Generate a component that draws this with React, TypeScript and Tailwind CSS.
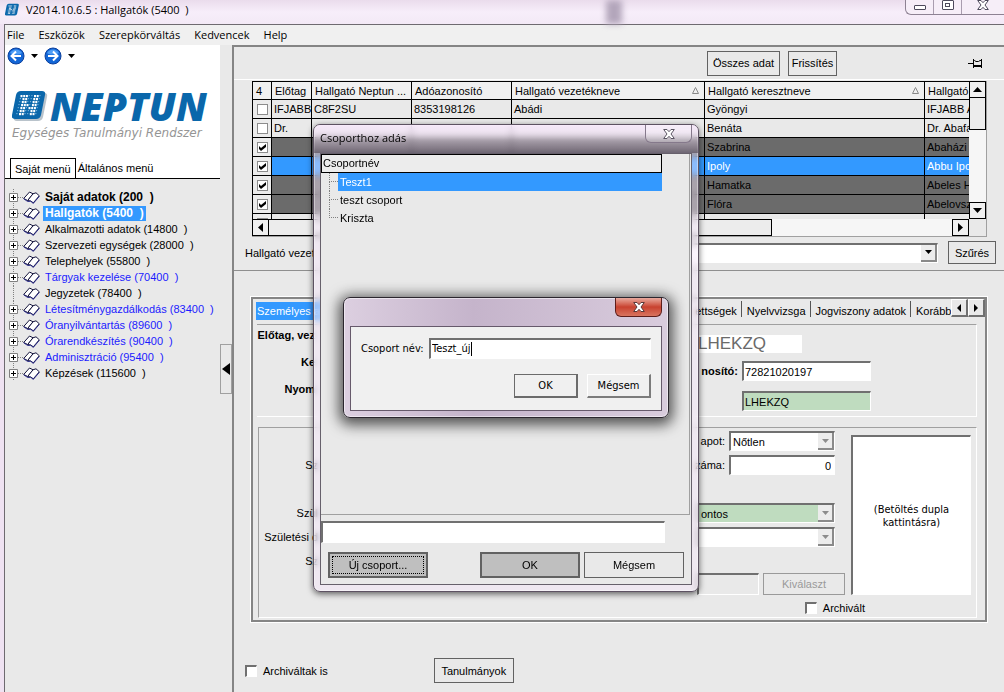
import type { ReactNode } from "react";
import clsx from "clsx";

type TreeItem = {
  label: string;
  tone?: "bold" | "selected" | "blue";
  leaf?: boolean;
};

const TREE: TreeItem[] = [
  { label: "Saját adatok (200\u00a0\u00a0)", tone: "bold" },
  { label: "Hallgatók (5400\u00a0\u00a0)", tone: "selected" },
  { label: "Alkalmazotti adatok (14800\u00a0\u00a0)" },
  { label: "Szervezeti egységek (28000\u00a0\u00a0)" },
  { label: "Telephelyek (55800\u00a0\u00a0)" },
  { label: "Tárgyak kezelése (70400\u00a0\u00a0)", tone: "blue" },
  { label: "Jegyzetek (78400\u00a0\u00a0)", leaf: true },
  { label: "Létesítménygazdálkodás (83400\u00a0\u00a0)", tone: "blue" },
  { label: "Óranyilvántartás (89600\u00a0\u00a0)", tone: "blue" },
  { label: "Órarendkészítés (90400\u00a0\u00a0)", tone: "blue" },
  { label: "Adminisztráció (95400\u00a0\u00a0)", tone: "blue" },
  { label: "Képzések (115600\u00a0\u00a0)" }
];

const ROWS = [
  { prefix: "IFJABB", code: "C8F2SU", tax: "8353198126", last: "Abádi", first: "Gyöngyi", full: "IFJABB A" },
  { prefix: "Dr.", first: "Benáta", full: "Dr. Abafa" },
  { first: "Szabrina", full: "Abaházi", state: "dark" },
  { first: "Ipoly", full: "Abbu Ipo", state: "selected" },
  { first: "Hamatka", full: "Abeles H", state: "dark" },
  { first: "Flóra", full: "Abelovsz", state: "dark" },
  { first: "Hannah", full: "Abelsz" }
];

const MENU = ["File", "Eszközök", "Szerepkörváltás", "Kedvencek", "Help"];

const sunken =
  "border-t-2 border-l-2 border-r border-b border-t-[#707070] border-l-[#707070] border-r-white border-b-white";

export default function App() {
  return (
    <div className="relative flex min-h-screen flex-col overflow-hidden bg-[#efe2f2] font-['Liberation_Sans',Arial,sans-serif] text-[11px] leading-4 text-black">
      <TitleBar />
      <div className="ml-1 flex flex-1 flex-col border-t border-l border-[#6e6a70] bg-[#e9e9e9]">
        <nav className="flex h-5 items-center gap-[14px] bg-[#f0f0f0] px-[2px] font-['Open_Sans',sans-serif] text-[11px]">
          {MENU.map((item) => (
            <button key={item} type="button">
              {item}
            </button>
          ))}
        </nav>
        <div className="flex flex-1">
          <Sidebar />
          <main className="flex min-w-0 flex-1 flex-col border-t-2 border-l-2 border-[#858585]">
            <Toolbar />
            <StudentList />
            <DetailPanel />
            <footer className="mt-9 flex items-center gap-[106px] pb-[6px] pl-[11px]">
              <CheckField id="archived-too" label="Archiváltak is" />
              <FlatButton className="h-[25px] w-20">Tanulmányok</FlatButton>
            </footer>
          </main>
        </div>
      </div>
      <GroupDialog />
      <NameDialog />
    </div>
  );
}

function TitleBar() {
  return (
    <header className="flex h-6 items-start bg-linear-to-b from-[#eadcec] via-[#f7eefa] to-[#f3e9f6]">
      <div className="flex items-center gap-[6px] pt-[2px] pl-[5px]">
        <NeptunMark className="h-[14px] w-[15px]" />
        <h1 className="font-['Open_Sans',sans-serif] text-[11px]">
          V2014.10.6.5 : Hallgatók (5400&nbsp;&nbsp;)
        </h1>
      </div>
      <div className="mr-[382px] ml-auto h-6 w-4 bg-[#b3a6bb] blur-[3px]" />
      <div className="-ml-[99px] flex h-[15px] w-[99px] shrink-0 rounded-bl-md border-b border-l border-[#8d8293] bg-[#f6eef8]">
        <button aria-label="Kis méret" className="flex w-7 items-center justify-center border-r border-[#a99daf]" type="button">
          <span className="h-[5px] w-[12px] rounded-[1px] border border-[#4d4a5c] bg-white" />
        </button>
        <button aria-label="Teljes méret" className="flex w-7 items-start justify-center border-r border-[#a99daf]" type="button">
          <span className="flex h-[10px] w-[12px] items-center justify-center rounded-[1px] border border-[#4d4a5c] bg-white">
            <span className="h-[4px] w-[5px] border border-[#4d4a5c]" />
          </span>
        </button>
        <button aria-label="Bezárás" className="flex flex-1 items-start justify-center" type="button">
          <CloseGlyph className="h-[10px] w-3 text-[#4d4a5c]" />
        </button>
      </div>
    </header>
  );
}

function Sidebar() {
  return (
    <aside className="flex w-[227px] shrink-0">
      <div className="w-[215px]">
        <div className="border-b border-black bg-white">
          <div className="flex h-5 items-center gap-[6px] px-[2px] pt-px">
            <NavArrow label="Vissza" />
            <DownGlyph className="h-1 w-[7px]" />
            <NavArrow flipped label="Előre" />
            <DownGlyph className="h-1 w-[7px]" />
          </div>
          <div className="mt-[22px] pl-[7px]">
            <div className="flex items-center gap-[2px]">
              <NeptunMark className="h-8 w-9 shrink-0" shadow />
              <span className="font-['Open_Sans',sans-serif] text-[39px] leading-[38px] font-extrabold text-[#0a67ab] italic">
                NEPTUN
              </span>
            </div>
            <p className="font-['DejaVu_Sans',sans-serif] text-[12px] leading-4 whitespace-nowrap text-[#959595] italic">
              Egységes Tanulmányi Rendszer
            </p>
          </div>
          <div className="mt-[17px] flex pl-[5px]" role="tablist">
            <button aria-selected className="-mb-px h-5 border border-b-0 border-black bg-white px-1" role="tab" type="button">
              Saját menü
            </button>
            <button aria-selected={false} className="h-5 px-[2px]" role="tab" type="button">
              Általános menü
            </button>
          </div>
        </div>
        <ul className="pt-[10px] pl-1">
          {TREE.map((item) => (
            <li className="flex h-4 items-center" key={item.label}>
              {item.leaf ? (
                <span className="ml-1 h-full w-[10px] border-l border-dotted border-[#808080]" />
              ) : (
                <ExpandBox />
              )}
              <BookIcon className="h-[13px] w-[17px] shrink-0" />
              <button
                className={clsx(
                  "ml-[3px] px-[2px] leading-[15px] whitespace-nowrap",
                  item.tone === "bold" && "text-[12px] font-bold",
                  item.tone === "selected" && "bg-[#3399ff] text-[12px] font-bold text-white",
                  item.tone === "blue" && "text-[#1b1bff]"
                )}
                type="button"
              >
                {item.label}
              </button>
            </li>
          ))}
        </ul>
      </div>
      <button
        aria-label="Menü elrejtése"
        className="mt-[299px] flex h-[50px] w-3 items-center justify-center self-start border border-[#a0a0a0]"
        type="button"
      >
        <svg className="h-3 w-2" viewBox="0 0 8 12">
          <path d="M8 0v12L0 6z" />
        </svg>
      </button>
    </aside>
  );
}

function Toolbar() {
  return (
    <div className="flex h-[33px] items-center gap-2 border-b border-white pr-[22px]">
      <FlatButton className="ml-auto h-[25px] w-[73px]">Összes adat</FlatButton>
      <FlatButton className="h-[25px] w-[49px]">Frissítés</FlatButton>
      <button aria-label="Rögzítés" className="ml-[123px]" type="button">
        <svg className="h-[11px] w-[14px]" fill="none" stroke="#000" viewBox="0 0 14 11">
          <path d="M0 5.500h5M5.500 1v9M5.500 2.500h1l1.500 1h2.500l1.500-1h1.500M5.500 8.500h8M6 7.500h7M13.500 1v9" />
        </svg>
      </button>
    </div>
  );
}

function StudentList() {
  return (
    <section className="border-b border-[#8f8f8f] pb-[6px]">
      <div className="mt-px mr-[17px] ml-[18px] border-r border-b border-[#a0a0a0]">
        <div className="flex">
          <div className="h-[138px] min-w-0 flex-1 overflow-hidden border-t border-l border-black">
            <table className="w-full table-fixed border-separate border-spacing-0">
              <thead>
                <tr>
                  <HeadCell className="w-[19px] text-center">4</HeadCell>
                  <HeadCell className="w-10">Előtag</HeadCell>
                  <HeadCell className="w-[100px]">Hallgató Neptun ...</HeadCell>
                  <HeadCell className="w-[100px]">Adóazonosító</HeadCell>
                  <HeadCell className="w-[193px]" sorted>
                    Hallgató vezetékneve
                  </HeadCell>
                  <HeadCell className="w-[220px]" sorted>
                    Hallgató keresztneve
                  </HeadCell>
                  <HeadCell last>Hallgató</HeadCell>
                </tr>
              </thead>
              <tbody>
                {ROWS.map((row) => (
                  <tr
                    className={clsx(
                      row.state === "dark" && "bg-[#6b6b6b]",
                      row.state === "selected" && "bg-[#3399ff] text-white"
                    )}
                    key={row.first}
                  >
                    <td className="h-[19px] border-r border-b border-black bg-[#ececec] p-0">
                      <RowCheck checked={Boolean(row.state)} label={row.first} />
                    </td>
                    <Cell>{row.prefix}</Cell>
                    <Cell>{row.code}</Cell>
                    <Cell>{row.tax}</Cell>
                    <Cell>{row.last}</Cell>
                    <Cell>{row.first}</Cell>
                    <Cell last>{row.full}</Cell>
                  </tr>
                ))}
              </tbody>
            </table>
          </div>
          <div className="flex h-[138px] w-[17px] shrink-0 flex-col bg-[#f6f6f6]">
            <ScrollButton label="Fel" path="M0 7h9L4.500 2z" />
            <div className="h-8 border border-t-0 border-black bg-[#ececec]" />
            <div className="flex-1" />
            <ScrollButton label="Le" path="M0 2h9L4.500 7z" />
          </div>
        </div>
        <div className="flex h-[17px]">
          <ScrollButton label="Balra" path="M7 0v9L2 4.500z" />
          <div className="w-[503px] border border-l-0 border-black bg-[#ececec]" />
          <div className="flex-1 bg-[#f6f6f6]" />
          <ScrollButton label="Jobbra" path="M2 0v9l5-4.500z" />
          <div className="w-[17px]" />
        </div>
      </div>
      <div className="mt-1 flex items-center pr-2 pl-[11px]">
        <label className="w-[68px] overflow-hidden whitespace-nowrap" htmlFor="filter">
          Hallgató vezet
        </label>
        <SelectField active className="ml-3 flex-1" id="filter" />
        <FlatButton className="ml-[10px] h-[23px] w-12">Szűrés</FlatButton>
      </div>
    </section>
  );
}

function DetailPanel() {
  return (
    <section className="mt-[26px] mr-[17px] ml-[17px] border-2 border-[#858585] outline outline-white">
      <div className="flex h-[21px] items-stretch overflow-hidden" role="tablist">
        <button className="mt-[3px] ml-[3px] h-[18px] bg-[#3399ff] px-px text-left whitespace-nowrap text-white" role="tab" type="button">
          Személyes adatok
        </button>
        <Tab className="ml-auto">ettségek</Tab>
        <Tab>Nyelvvizsga</Tab>
        <Tab>Jogviszony adatok</Tab>
        <Tab className="w-10" last>
          Korábbi
        </Tab>
        <TabScroll label="Előző fülek" path="M4 0v8L0 4z" />
        <TabScroll label="Következő fülek" path="M0 0v8l4-4z" />
      </div>
      <div className="mt-1 mr-2 ml-1 flex h-[93px] justify-between border-t border-r border-b border-t-[#a0a0a0] border-r-white border-b-white">
        <div className="flex w-[58px] flex-col items-end gap-[11px] pt-[2px] font-bold whitespace-nowrap">
          <span>Előtag, vez</span>
          <span>Ke</span>
          <span>Nyom</span>
        </div>
        <div className="mr-[105px] grid grid-cols-[40px_129px] items-center gap-x-1">
          <div className="col-span-2 mb-1 h-[18px] self-end justify-self-start bg-white pr-9 text-[17px] leading-[18px] text-[#6a6a6a]">
            LHEKZQ
          </div>
          <label className="text-right font-bold" htmlFor="edu-id">
            nosító:
          </label>
          <input className={clsx("h-5 bg-white px-px", sunken)} defaultValue="72821020197" id="edu-id" />
          <span />
          <input aria-label="Neptun kód" className={clsx("h-5 bg-[#bfdcbf] px-px", sunken)} defaultValue="LHEKZQ" />
        </div>
      </div>
      <div className="mt-[10px] mr-2 mb-[2px] ml-[5px] flex h-[191px] justify-between border border-[#a0a0a0] border-r-white border-b-white">
        <div className="flex w-[59px] flex-col items-end gap-2 pt-[29px] whitespace-nowrap">
          <span>Sz</span>
          <span className="mt-6">Szül</span>
          <span>Születési d</span>
          <span>Sz</span>
        </div>
        <div className="mr-[5px] flex pt-[3px]">
          <div className="flex flex-col items-end">
            <div className="flex items-center gap-1">
              <label htmlFor="marital">apot:</label>
              <SelectField className="w-[106px]" id="marital" value="Nőtlen" />
            </div>
            <div className="mt-1 flex items-center gap-1">
              <label htmlFor="children">záma:</label>
              <input className={clsx("h-5 w-[106px] bg-white px-[3px] text-right", sunken)} defaultValue="0" id="children" />
            </div>
            <SelectField className="mt-7 w-[138px]" green label="Pontosság" value="ontos" />
            <SelectField className="mt-1 w-[138px]" label="Születési adat" />
            <div className="mt-[26px] -mr-[10px] flex items-center gap-1">
              <input aria-label="Kiválasztott" className={clsx("h-[22px] w-[62px]", sunken)} disabled />
              <button className="h-[22px] w-[82px] border border-[#9a9a9a] text-[#9a9a9a]" disabled type="button">
                Kiválaszt
              </button>
            </div>
            <div className="mt-[5px] -mr-[30px]">
              <CheckField id="archived" label="Archivált" />
            </div>
          </div>
          <button
            className={clsx(
              "mt-1 ml-4 flex h-40 w-[120px] items-center justify-center bg-white px-4 text-center font-['DejaVu_Sans_Condensed','DejaVu_Sans',sans-serif] text-[11px] leading-[13px]",
              sunken
            )}
            type="button"
          >
            (Betöltés dupla kattintásra)
          </button>
        </div>
      </div>
    </section>
  );
}

function GroupDialog() {
  return (
    <div
      aria-label="Csoporthoz adás"
      className="absolute top-[124px] left-[313px] w-[386px] overflow-hidden rounded-[7px] border border-[#5d5262] bg-[#f6e6fb]/45 px-[6px] pb-[6px] shadow-[0_2px_6px_rgba(0,0,0,0.6)] inset-ring inset-ring-white/40 backdrop-blur-[3px]"
      role="dialog"
    >
      <div className="-mx-[6px] flex h-7 items-start justify-between bg-linear-to-b from-[#f8e8fc]/70 via-[#d8c8dc]/20 via-45% to-[#4a404e]/60 px-[6px]">
        <h2 className="pt-[5px] font-['Open_Sans',sans-serif] text-[11px]">Csoporthoz adás</h2>
        <button
          aria-label="Bezárás"
          className="flex h-[18px] w-[47px] items-center justify-center rounded-b-md border border-t-0 border-[#85798b] bg-white/20"
          type="button"
        >
          <CloseGlyph className="h-[10px] w-3 text-[#5b5563]" />
        </button>
      </div>
      <div className="border border-[#66606b] bg-[#e9e9e9]">
        <div className="mr-px h-[361px] border-r border-b border-[#a0a0a0]">
          <div className="h-[19px] w-[341px] border border-black bg-[#ececec] px-px">Csoportnév</div>
          <ul className="w-[341px] pl-2">
            <GroupItem selected>Teszt1</GroupItem>
            <GroupItem>teszt csoport</GroupItem>
            <GroupItem last>Kriszta</GroupItem>
          </ul>
        </div>
        <input aria-label="Csoport" className={clsx("mt-[6px] block h-[22px] w-[344px] bg-white px-1", sunken)} />
        <div className="flex px-[7px] pt-[9px] pb-[6px]">
          <button className="h-[26px] w-[100px] border-2 border-[#626262] bg-[#bfbfbf] p-[2px]" type="button">
            <span className="flex h-full items-center justify-center border border-dotted border-black">Új csoport...</span>
          </button>
          <button className="ml-[52px] h-[26px] w-[100px] border-2 border-[#626262] bg-[#bfbfbf]" type="button">
            OK
          </button>
          <FlatButton className="ml-1 h-[26px] w-[100px]">Mégsem</FlatButton>
        </div>
      </div>
    </div>
  );
}

function NameDialog() {
  return (
    <div
      aria-label="Új csoport"
      className="absolute top-[297px] left-[343px] w-[326px] rounded-[7px] border border-[#2b262e] bg-linear-to-r from-[#dccfe0] via-[#c5b4cb] via-40% to-[#d9ccdd] px-[6px] pb-[6px] font-['DejaVu_Sans_Condensed','DejaVu_Sans',sans-serif] shadow-[0_3px_14px_4px_rgba(0,0,0,0.65)] inset-ring inset-ring-white/50"
      role="dialog"
    >
      <div className="flex h-7 items-start justify-end">
        <button
          aria-label="Bezárás"
          className="flex h-[19px] w-[47px] items-center justify-center rounded-b-md border border-t-0 border-[#5e1d1a] bg-linear-to-b from-[#e8a99e] via-[#c8412f] via-50% to-[#d9745f]"
          type="button"
        >
          <CloseGlyph className="h-[10px] w-3 text-[#5a3a3a]" />
        </button>
      </div>
      <form className="border border-[#66596b] bg-[#f0f0f0] px-[10px] pt-[11px] pb-3" onSubmit={(e) => e.preventDefault()}>
        <div className="flex items-center justify-between">
          <label className="text-[11px]" htmlFor="group-name">
            Csoport név:
          </label>
          <div className={clsx("flex h-[21px] w-[222px] items-center bg-white", sunken)}>
            <input className="field-sizing-content pr-px pl-px text-[11px] outline-none" defaultValue="Teszt_új" id="group-name" />
            <span className="h-[14px] w-px bg-black" />
          </div>
        </div>
        <div className="mt-[15px] flex justify-end gap-[9px] text-[11px]">
          <button className="h-6 w-[64px] border border-r-2 border-b-2 border-[#6b6b6b]" type="submit">
            OK
          </button>
          <button className="h-6 w-[64px] border border-r-2 border-b-2 border-white border-r-[#7b7b7b] border-b-[#7b7b7b]" type="button">
            Mégsem
          </button>
        </div>
      </form>
    </div>
  );
}

function GroupItem({ children, selected, last }: { children: ReactNode; selected?: boolean; last?: boolean }) {
  return (
    <li className="flex h-[18px]">
      <span className="flex w-[9px] flex-col">
        <span className="h-[9px] border-b border-l border-dotted border-[#808080]" />
        {!last && <span className="h-[9px] border-l border-dotted border-[#808080]" />}
      </span>
      <button className={clsx("flex-1 px-[2px] text-left", selected && "bg-[#3399ff] text-white")} type="button">
        {children}
      </button>
    </li>
  );
}

function RowCheck({ checked, label }: { checked: boolean; label: string }) {
  return (
    <label className="mx-auto grid h-[11px] w-[11px] place-items-center">
      <input
        aria-label={label}
        className="peer col-start-1 row-start-1 h-[11px] w-[11px] appearance-none border border-[#8c8c8c] bg-white"
        defaultChecked={checked}
        type="checkbox"
      />
      <svg
        className="pointer-events-none invisible col-start-1 row-start-1 h-[7px] w-[7px] peer-checked:visible"
        viewBox="0 0 7 7"
      >
        <path d="M0 2v3l2 2 5-4V0L2 4z" fill="#000" />
      </svg>
    </label>
  );
}

function HeadCell({
  children,
  className,
  sorted,
  last
}: {
  children: ReactNode;
  className?: string;
  sorted?: boolean;
  last?: boolean;
}) {
  return (
    <th
      className={clsx(
        "h-[18px] overflow-hidden border-b border-black bg-[#f0f0f0] px-[3px] py-0 text-left font-normal whitespace-nowrap",
        !last && "border-r",
        className
      )}
      scope="col"
    >
      {sorted ? (
        <span className="flex items-center justify-between">
          {children}
          <svg className="mr-[2px] h-[7px] w-[7px]" fill="none" stroke="#888" viewBox="0 0 7 7">
            <path d="M.5 6.500h6L3.500.5z" />
          </svg>
        </span>
      ) : (
        children
      )}
    </th>
  );
}

function Cell({ children, last }: { children?: ReactNode; last?: boolean }) {
  return (
    <td className={clsx("h-[19px] overflow-hidden border-b border-black px-[2px] py-0 whitespace-nowrap", !last && "border-r")}>
      {children}
    </td>
  );
}

function FlatButton({ children, className }: { children: ReactNode; className?: string }) {
  return (
    <button className={clsx("border border-[#626262] whitespace-nowrap", className)} type="button">
      {children}
    </button>
  );
}

function CheckField({ id, label }: { id: string; label: string }) {
  return (
    <div className="flex items-center gap-[6px]">
      <input className={clsx("h-3 w-3 appearance-none bg-white", sunken)} id={id} type="checkbox" />
      <label htmlFor={id}>{label}</label>
    </div>
  );
}

function SelectField({
  id,
  label,
  value,
  className,
  green,
  active
}: {
  id?: string;
  label?: string;
  value?: string;
  className?: string;
  green?: boolean;
  active?: boolean;
}) {
  return (
    <div className={clsx("flex h-5", sunken, green ? "bg-[#bfdcbf]" : "bg-white", className)}>
      <select aria-label={label} className="min-w-0 flex-1 appearance-none px-[2px]" id={id}>
        <option>{value}</option>
      </select>
      <span className="flex w-4 items-center justify-center border-r-2 border-b-2 border-[#8a8a8a] bg-[#ececec]">
        <DownGlyph className={clsx("h-1 w-[7px]", !active && "text-[#8c8c8c]")} />
      </span>
    </div>
  );
}

function Tab({ children, className, last }: { children: ReactNode; className?: string; last?: boolean }) {
  return (
    <button
      className={clsx("my-[2px] h-4 overflow-hidden pl-[5px] leading-5", !last && "border-r border-[#555] pr-1", className)}
      role="tab"
      type="button"
    >
      {children}
    </button>
  );
}

function TabScroll({ label, path }: { label: string; path: string }) {
  return (
    <button
      aria-label={label}
      className="flex h-[18px] w-[17px] items-center justify-center border border-r-2 border-b-2 border-white border-r-[#707070] border-b-[#707070]"
      type="button"
    >
      <svg className="h-2 w-1" viewBox="0 0 4 8">
        <path d={path} />
      </svg>
    </button>
  );
}

function ScrollButton({ label, path }: { label: string; path: string }) {
  return (
    <button aria-label={label} className="flex h-[17px] w-[17px] shrink-0 items-center justify-center border border-black bg-[#f0f0f0]" type="button">
      <svg className="h-[9px] w-[9px]" viewBox="0 0 9 9">
        <path d={path} />
      </svg>
    </button>
  );
}

function DownGlyph({ className }: { className?: string }) {
  return (
    <svg className={className} fill="currentColor" viewBox="0 0 7 4">
      <path d="M0 0h7L3.500 4z" />
    </svg>
  );
}

function CloseGlyph({ className }: { className?: string }) {
  return (
    <svg className={className} fill="#fff" stroke="currentColor" viewBox="0 0 12 10">
      <path d="M.7.5h3.300l2 2.200 2-2.200h3.300L8 5l3.300 4.500H8L6 7.300 4 9.500H.7L4 5z" />
    </svg>
  );
}

function NavArrow({ flipped, label }: { flipped?: boolean; label: string }) {
  return (
    <button aria-label={label} type="button">
      <svg className={clsx("h-[18px] w-[18px]", flipped && "-scale-x-100")} viewBox="0 0 18 18">
        <circle cx="9" cy="9" fill="#1266d6" r="8" stroke="#0b3f9c" />
        <path d="M3 6a7 7 0 0 1 12 0c-3 2-8 2-12 0z" fill="#4d9cf5" />
        <path d="M14 9H5M9 4.500L4.500 9 9 13.500" fill="none" stroke="#fff" strokeWidth="2" />
      </svg>
    </button>
  );
}

function ExpandBox() {
  return (
    <svg className="-mr-[3px] h-4 w-[17px] shrink-0" fill="none" viewBox="0 0 17 16">
      <path d="M4.500 0v16M9 8.500h8" stroke="#808080" strokeDasharray="1 1" />
      <path d="M.5 4.500h8v8h-8z" fill="#fff" stroke="#808080" />
      <path d="M2 8.500h5M4.500 6v5" stroke="#000" />
    </svg>
  );
}

function BookIcon({ className }: { className?: string }) {
  return (
    <svg className={className} fill="#fff" stroke="#14143c" strokeLinejoin="round" viewBox="0 0 17 13">
      <path d="M.7 7.500L6.500 1l3.500 1.800L4.700 9.500z" />
      <path d="M4.700 9.500L10 2.800l3-1 3.300 3-6 7-2.600-1.800z" />
      <path d="M.7 7.800l4 2.700 3-.3 2.600 2.200 6-7" fill="none" stroke="#2b2b8a" />
    </svg>
  );
}

const MARK_DOTS = [0, 1, 2, 3, 4, 5, 6].flatMap((row) =>
  [0, 1, 2, 3, 4, 5, 6, 7].map((col) => ({ row, col }))
);

function NeptunMark({ className, shadow }: { className?: string; shadow?: boolean }) {
  return (
    <svg className={className} viewBox="0 0 36 32">
      {shadow && <path d="M10 3h22q4 0 3 4l-4 20q-1 4-5 4H5q-4 0-3-4L6 7q1-4 4-4z" fill="#b9c3cb" />}
      <path d="M9 1h21q4 0 3 4l-4 20q-1 4-5 4H3q-4 0-3-4L4 5q1-4 5-4z" fill="#0a67ab" />
      {MARK_DOTS.map(({ row, col }) => {
        // left stem, right stem and the diagonal of the N
        const bright = col === 1 || col === 2 || col === 5 || col === 6 || col - row === 0;
        return (
          <rect
            fill={bright ? "#fff" : "#6fadd9"}
            height={bright ? 2.2 : 1.2}
            key={`${row}-${col}`}
            width={bright ? 2 : 1.2}
            x={8.500 + col * 2.700 - row * 0.7}
            y={5 + row * 3}
          />
        );
      })}
    </svg>
  );
}
